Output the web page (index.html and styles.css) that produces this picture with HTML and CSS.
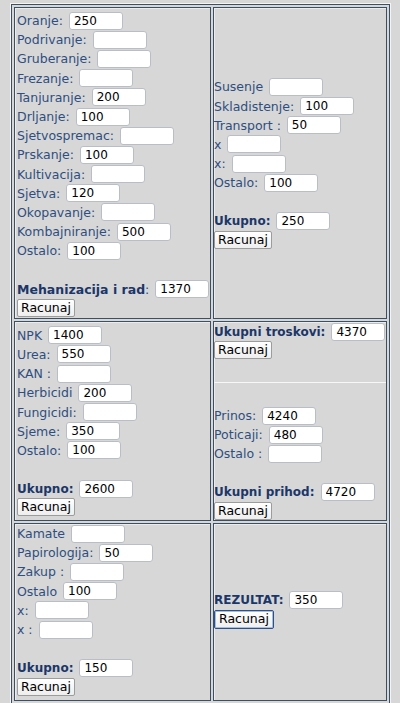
FILE: index.html
```html
<!DOCTYPE html>
<html>
<head>
<meta charset="utf-8">
<title>Kalkulacija</title>
<link rel="stylesheet" href="styles.css">
</head>
<body>
<table class="calc">
  <tr class="r1">
    <td class="cell left">
      <div class="row"><span>Oranje:</span><input class="fld" type="text" value="250"></div>
      <div class="row"><span>Podrivanje:</span><input class="fld" type="text" value=""></div>
      <div class="row"><span>Gruberanje:</span><input class="fld" type="text" value=""></div>
      <div class="row"><span>Frezanje:</span><input class="fld" type="text" value=""></div>
      <div class="row"><span>Tanjuranje:</span><input class="fld" type="text" value="200"></div>
      <div class="row"><span>Drljanje:</span><input class="fld" type="text" value="100"></div>
      <div class="row"><span>Sjetvospremac:</span><input class="fld" type="text" value=""></div>
      <div class="row"><span>Prskanje:</span><input class="fld" type="text" value="100"></div>
      <div class="row"><span>Kultivacija:</span><input class="fld" type="text" value=""></div>
      <div class="row"><span>Sjetva:</span><input class="fld" type="text" value="120"></div>
      <div class="row"><span>Okopavanje:</span><input class="fld" type="text" value=""></div>
      <div class="row"><span>Kombajniranje:</span><input class="fld" type="text" value="500"></div>
      <div class="row"><span>Ostalo:</span><input class="fld" type="text" value="100"></div>
      <div class="row"></div>
      <div class="row"><span><b class="strong mech">Mehanizacija i rad</b>:</span><input class="fld" type="text" value="1370"></div>
      <button class="btn" type="button">Racunaj</button>
    </td>
    <td class="cell right">
      <div class="row"><span>Susenje</span><input class="fld" type="text" value=""></div>
      <div class="row"><span>Skladistenje:</span><input class="fld" type="text" value="100"></div>
      <div class="row"><span>Transport :</span><input class="fld" type="text" value="50"></div>
      <div class="row"><span>x</span><input class="fld" type="text" value=""></div>
      <div class="row"><span>x:</span><input class="fld" type="text" value=""></div>
      <div class="row"><span>Ostalo:</span><input class="fld" type="text" value="100"></div>
      <div class="row"></div>
      <div class="row"><b class="strong">Ukupno:</b><input class="fld" type="text" value="250"></div>
      <button class="btn" type="button">Racunaj</button>
    </td>
  </tr>
  <tr class="r2">
    <td class="cell left">
      <div class="row"><span>NPK</span><input class="fld" type="text" value="1400"></div>
      <div class="row"><span>Urea:</span><input class="fld" type="text" value="550"></div>
      <div class="row"><span>KAN :</span><input class="fld" type="text" value=""></div>
      <div class="row"><span>Herbicidi</span><input class="fld" type="text" value="200"></div>
      <div class="row"><span>Fungicidi:</span><input class="fld" type="text" value=""></div>
      <div class="row"><span>Sjeme:</span><input class="fld" type="text" value="350"></div>
      <div class="row"><span>Ostalo:</span><input class="fld" type="text" value="100"></div>
      <div class="row"></div>
      <div class="row"><b class="strong">Ukupno:</b><input class="fld" type="text" value="2600"></div>
      <button class="btn" type="button">Racunaj</button>
    </td>
    <td class="cell right split">
      <div class="part-top">
        <div class="row"><b class="strong">Ukupni troskovi:</b><input class="fld" type="text" value="4370"></div>
        <button class="btn" type="button">Racunaj</button>
      </div>
      <div class="divider"></div>
      <div class="part-bottom">
        <div class="row"><span>Prinos:</span><input class="fld" type="text" value="4240"></div>
        <div class="row"><span>Poticaji:</span><input class="fld" type="text" value="480"></div>
        <div class="row"><span>Ostalo :</span><input class="fld" type="text" value=""></div>
        <div class="row"></div>
        <div class="row"><b class="strong">Ukupni prihod:</b><input class="fld" type="text" value="4720"></div>
        <button class="btn" type="button">Racunaj</button>
      </div>
    </td>
  </tr>
  <tr class="r3">
    <td class="cell left">
      <div class="row"><span>Kamate</span><input class="fld" type="text" value=""></div>
      <div class="row"><span>Papirologija:</span><input class="fld" type="text" value="50"></div>
      <div class="row"><span>Zakup :</span><input class="fld" type="text" value=""></div>
      <div class="row"><span>Ostalo</span><input class="fld" type="text" value="100"></div>
      <div class="row"><span>x:</span><input class="fld" type="text" value=""></div>
      <div class="row"><span>x :</span><input class="fld" type="text" value=""></div>
      <div class="row"></div>
      <div class="row"><b class="strong">Ukupno:</b><input class="fld" type="text" value="150"></div>
      <button class="btn" type="button">Racunaj</button>
    </td>
    <td class="cell right result">
      <div class="row"><b class="strong">REZULTAT:</b><input class="fld" type="text" value="350"></div>
      <button class="btn focused" type="button">Racunaj</button>
    </td>
  </tr>
</table>
</body>
</html>
```
FILE: styles.css
```css
html, body {
  margin: 0;
  padding: 0;
}

body {
  background: #d7d7d7;
  font-family: "DejaVu Sans", Verdana, sans-serif;
  font-size: 12.5px;
  color: #2f4e80;
}

.calc {
  margin: 4px 0 0 11px;
  width: 379px;
  table-layout: fixed;
  border-collapse: separate;
  border-spacing: 2px;
  border: 1px solid #3b5065;
  outline: 1px solid #f4f4f4;
}

.cell {
  box-sizing: border-box;
  border: 1px solid #3b5065;
  box-shadow: inset 1px 1px 0 #ececec;
  vertical-align: middle;
  padding: 0;
}

.cell.left {
  width: 197px;
  padding-left: 2px;
}

.cell.right {
  padding-left: 0;
}

.r1 .cell { height: 312px; }
.r2 .cell { height: 200px; }
.r3 .cell { height: 178px; }

.r1 .cell.left {
  vertical-align: top;
  padding-top: 3px;
}

.r3 .cell.left {
  vertical-align: top;
  padding-top: 0;
}

.cell.result {
  padding-bottom: 5px;
}

.row {
  display: flex;
  align-items: center;
  gap: 6px;
  height: 19.2px;
  white-space: nowrap;
}

.strong {
  font-weight: bold;
  font-size: 12px;
  color: #1b3668;
}

.strong.mech {
  font-size: 12.5px;
}

.fld {
  box-sizing: border-box;
  width: 54px;
  height: 18px;
  margin: 0;
  padding: 0 4px;
  border: 1px solid #b9bec6;
  border-radius: 3px;
  background: #fff;
  font-family: "DejaVu Sans", Verdana, sans-serif;
  font-size: 12px;
  color: #000;
}

.btn {
  display: block;
  box-sizing: border-box;
  height: 18px;
  margin: 0;
  padding: 0 3px;
  border: 1px solid #9c9c9c;
  border-radius: 2px;
  background: linear-gradient(#ffffff, #eeeeee);
  font-family: "DejaVu Sans", Verdana, sans-serif;
  font-size: 12.5px;
  line-height: 16px;
  color: #000;
}

.btn.focused {
  height: 19px;
  padding: 0 4px;
  border-color: #2f4f88;
  box-shadow: inset 0 0 0 1px #a6bde0;
}

.cell.split {
  vertical-align: top;
}

.part-top {
  height: 60px;
}

.divider {
  height: 1px;
  background: #f7f7f7;
}

.part-bottom {
  padding-top: 23px;
}
```
